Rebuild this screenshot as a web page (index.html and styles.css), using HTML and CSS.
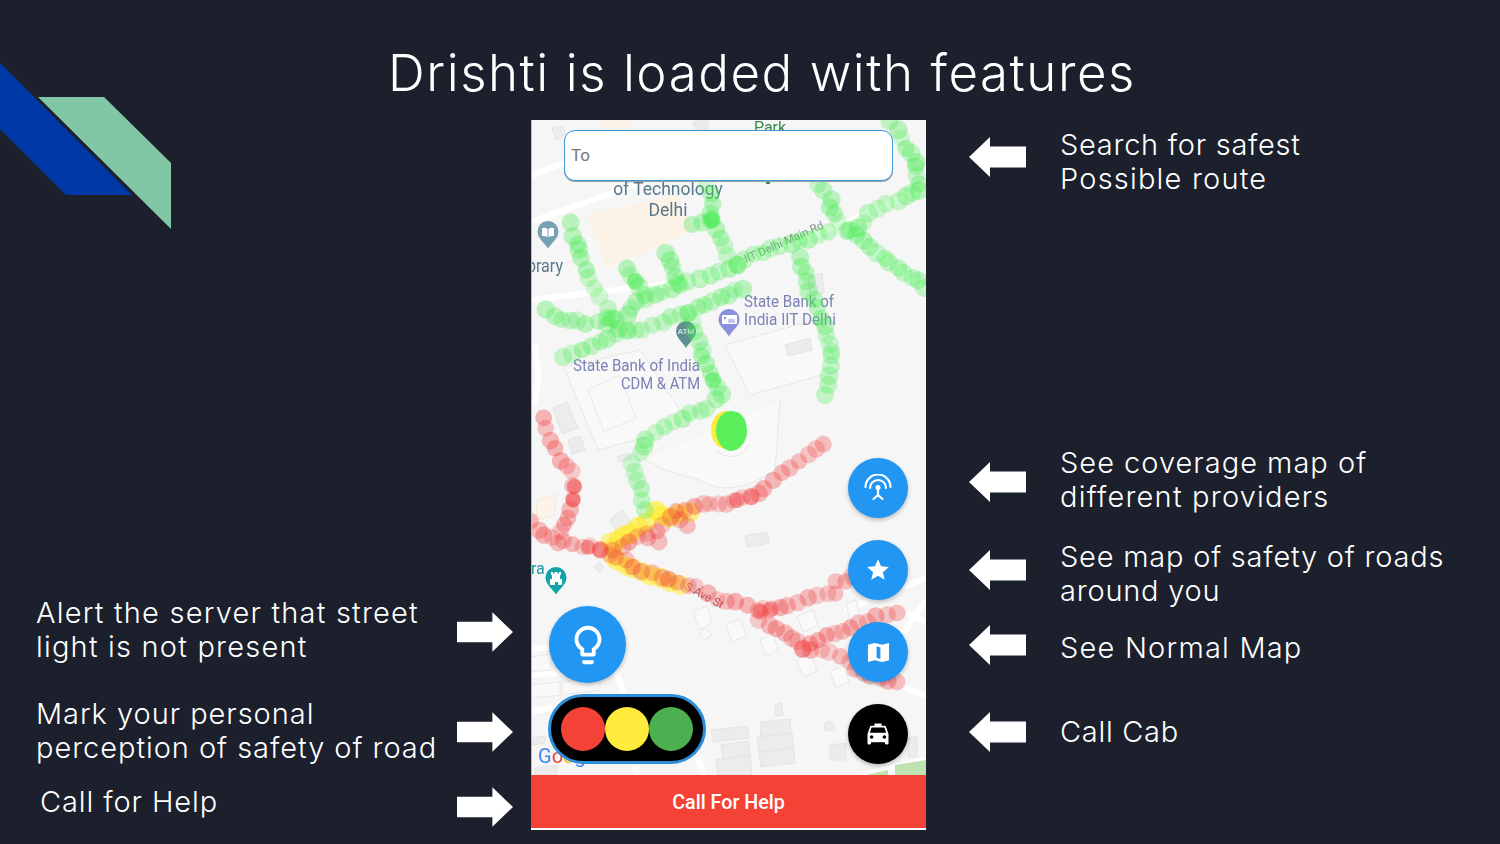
FILE: index.html
```html
<!DOCTYPE html>
<html lang="en">
<head>
    <meta charset="UTF-8">
    <title>Drishti features</title>
    <link rel="stylesheet" href="styles.css">
</head>
<body>
    <div class="slide">
        <svg class="deco" width="172" height="230" viewBox="0 0 172 230">
            <polygon points="0,63 132,195 66,195 0,129" fill="#0039a6"/>
            <polygon points="38,97 104,97 171,163 171,229" fill="#81c7a5"/>
        </svg>

        <h1 class="title">Drishti is loaded with features</h1>

        <div class="columns">
            <div class="notes-left">
                <div class="note note-alert">
                    <p>Alert the server that street<br><span class="loose">light is not present</span></p>
                    <svg class="arrow" viewBox="0 0 57 40"><polygon points="0,9.5 36,9.5 36,0 57,20 36,40 36,30.5 0,30.5"/></svg>
                </div>
                <div class="note note-mark">
                    <p>Mark your personal<br>perception of safety of road</p>
                    <svg class="arrow" viewBox="0 0 57 40"><polygon points="0,9.5 36,9.5 36,0 57,20 36,40 36,30.5 0,30.5"/></svg>
                </div>
                <div class="note note-help">
                    <p>Call for Help</p>
                    <svg class="arrow" viewBox="0 0 57 40"><polygon points="0,9.5 36,9.5 36,0 57,20 36,40 36,30.5 0,30.5"/></svg>
                </div>
            </div>

            <div class="phone">
                <div class="map">
                    <svg id="mapCanvas" class="map-canvas" viewBox="531 120 395 655" width="395" height="655">
                        <rect x="531" y="120" width="395" height="655" fill="#f6f6f7"/>
                        <g class="roads">
                            <path d="M531 176 L640 132"/>
                            <path d="M531 222 L660 176"/>
                            <path d="M531 300 L700 280 L840 225 L926 188"/>
                            <path d="M850 232 L926 290"/>
                            <path d="M708 150 L712 200"/>
                            <path d="M845 610 L926 578"/>
                            <path d="M903 687 L926 696"/>
                            <path d="M903 633 L926 600"/>
                            <path d="M907 613 L926 622"/>
                            <path d="M531 650 L580 640"/>
                            <path d="M531 675 L615 668 L624 693"/>
                            <path d="M531 712 L560 706"/>
                            <path d="M698 757 L704 775"/>
                            <path d="M634 767 L638 775"/>
                            <path d="M863 775 L926 760"/>
                            <path d="M534 345 Q542 375 534 404"/>
                        </g>
                        <polygon points="587,215 677,195 693,230 607,268" fill="#fdf2e6"/>
                        <polygon points="600,120 625,120 630,130 605,130" fill="#fdf2e6"/>
                        <polygon points="537,500 556,495 554,516 536,520" fill="#fdf3ea" stroke="#f6e8da"/>
                        <polygon points="895,765 926,760 926,775 895,775" fill="#bfe3b0"/>
                        <polygon points="866,775 888,770 888,775" fill="#bfe3b0"/>
                        <g class="outlines">
                            <path d="M564 367 L640 350 L690 425 L598 450 Z"/>
                            <path d="M588 390 L619 375 L636 418 L604 432 Z"/>
                            <path d="M725 345 L815 320 L840 370 L750 395 Z"/>
                            <path d="M645 460 L665 470 L700 480 Q730 500 775 470 L780 400"/>
                            <path d="M715 450 Q735 465 750 445"/>
                            <path d="M726 624 L741 619 L746 636 L732 642 Z"/>
                            <path d="M760 640 L773 634 L778 650 L766 656 Z"/>
                            <path d="M796 660 L811 653 L817 671 L804 677 Z"/>
                            <path d="M830 671 L844 665 L849 682 L836 688 Z"/>
                            <path d="M797 616 L813 610 L818 626 L803 632 Z"/>
                            <path d="M846 604 L856 600 L860 616 L850 620 Z"/>
                            <path d="M693 612 L707 606 L712 622 L700 630 Z"/>
                            <path d="M700 635 L704 628 L712 634 L705 640 Z"/>
                            <path d="M531 657 L551 654 L551 670 L531 672 Z"/>
                            <path d="M531 685 L560 682 L560 695 L531 698 Z"/>
                            <path d="M562 682 L600 678 L600 690 L562 695 Z"/>
                        </g>
                        <g class="blocks">
                            <polygon points="553,408 567,402 578,428 562,434"/>
                            <polygon points="568,440 581,436 585,450 572,454"/>
                            <polygon points="618,456 631,453 632,459 619,462"/>
                            <polygon points="745,536 767,532 769,543 747,547"/>
                            <polygon points="610,520 622,510 633,525 618,534"/>
                            <polygon points="594,567 599,562 604,567 599,572"/>
                            <polygon points="711,730 747,726 749,738 713,742"/>
                            <polygon points="721,745 748,741 750,755 723,759"/>
                            <polygon points="716,760 750,755 752,775 718,775"/>
                            <polygon points="760,722 790,719 791,733 761,736"/>
                            <polygon points="757,737 792,733 794,748 759,752"/>
                            <polygon points="759,752 794,748 795,763 761,767"/>
                            <polygon points="775,705 782,703 783,715 776,716"/>
                            <polygon points="830,745 846,743 846,760 830,760"/>
                            <polygon points="908,738 917,736 917,757 908,757"/>
                            <polygon points="533,738 545,736 545,743 533,745"/>
                            <polygon points="535,768 557,765 557,775 535,775"/>
                            <polygon points="808,277 822,273 824,293 810,296"/>
                            <polygon points="785,345 810,338 812,350 788,356"/>
                            <polygon points="552,128 562,126 566,134 556,140"/>
                            <polygon points="693,122 708,120 708,130 696,130"/>
                            <circle cx="829" cy="726" r="5"/>
                        </g>

                        <text class="lbl lbl-green" x="770" y="133" text-anchor="middle">Park</text>
                        <text class="lbl lbl-blue" x="668" y="195" text-anchor="middle">of Technology</text>
                        <text class="lbl lbl-blue" x="668" y="216" text-anchor="middle">Delhi</text>
                        <text class="lbl lbl-blue" x="527" y="272" textLength="36" lengthAdjust="spacingAndGlyphs">brary</text>
                        <text class="lbl lbl-bank" x="744" y="307" textLength="90" lengthAdjust="spacingAndGlyphs">State Bank of</text>
                        <text class="lbl lbl-bank" x="744" y="325" textLength="92" lengthAdjust="spacingAndGlyphs">India IIT Delhi</text>
                        <text class="lbl lbl-bank" x="573" y="371" textLength="127" lengthAdjust="spacingAndGlyphs">State Bank of India</text>
                        <text class="lbl lbl-bank" x="621" y="389" textLength="79" lengthAdjust="spacingAndGlyphs">CDM &amp; ATM</text>
                        <text class="lbl lbl-road" transform="translate(746 263) rotate(-24)">IIT Delhi Main Rd</text>
                        <text class="lbl lbl-road lbl-red" transform="translate(684 589) rotate(28)">S Ave St</text>
                        <text class="lbl lbl-teal" x="531" y="574">ra</text>

                        <path d="M548 221 a10.500 10.500 0 0 1 10.500 10.500 c0 7 -6 10 -10.500 17 c-4.500 -7 -10.500 -10 -10.500 -17 a10.500 10.500 0 0 1 10.500 -10.500z" fill="#78a0b4"/>
                        <path d="M542 228 q3 -1 5.500 1 v8 q-2.500 -1.500 -5.500 -1z M554 228 q-3 -1 -5.500 1 v8 q2.500 -1.500 5.500 -1z" fill="#fff"/>
                        <path d="M729 309 a10.500 10.500 0 0 1 10.500 10.500 c0 7 -6 9 -10.500 17 c-4.500 -8 -10.500 -10 -10.500 -17 a10.500 10.500 0 0 1 10.500 -10.500z" fill="#8a90dc"/>
                        <rect x="722" y="315" width="15" height="9" rx="1" fill="#fff"/>
                        <circle cx="725" cy="318" r="1.200" fill="#8a90dc"/>
                        <path d="M728 320 h7 M728 322 h7" stroke="#8a90dc" stroke-width="1"/>
                        <path d="M686 321 a10 10 0 0 1 10 10 c0 7 -6 10 -10 17 c-4 -7 -10 -10 -10 -17 a10 10 0 0 1 10 -10z" fill="#5f8f92"/>
                        <text class="lbl-atm" x="686" y="334" text-anchor="middle">ATM</text>
                        <path d="M556 567 a10.500 10.500 0 0 1 10.500 10.500 c0 7 -6 10 -10.500 17 c-4.500 -7 -10.500 -10 -10.500 -17 a10.500 10.500 0 0 1 10.500 -10.500z" fill="#14a3a8"/>
                        <path d="M550 585 v-6 h2 v-4 h-1 v-3 h2 v1.500 h1.500 v-1.500 h3 v1.500 h1.500 v-1.500 h2 v3 h-1 v4 h2 v6 h-4 v-3 h-3 v3z" fill="#fff"/>

                        <g id="tracks"></g>
                        <ellipse cx="726" cy="430" rx="15" ry="19" fill="#fdeb3c"/>
                        <path d="M731 411 C742 411 747 420 747 431 C747 442 739 451 731 451 C723 451 716 441 716 431 C716 420 722 411 731 411z" fill="#5bee5b"/>
                        <rect x="766" y="178" width="4" height="6" fill="#3b8a4a"/>

                        <text class="lbl-google" x="538" y="763"><tspan fill="#4285f4">G</tspan><tspan fill="#ea4335">o</tspan><tspan fill="#fbbc05">o</tspan><tspan fill="#4285f4">g</tspan></text>
                        <rect x="531" y="120" width="1" height="655" fill="#b9bcc2"/>
                    </svg>

                    <div class="search">To</div>

                    <button class="fab fab-bulb">
                        <svg width="46" height="46" viewBox="0 0 24 24"><path d="M9 21c0 .55.45 1 1 1h4c.55 0 1-.45 1-1v-1H9v1zm3-19C8.140 2 5 5.140 5 9c0 2.380 1.190 4.470 3 5.740V17c0 .55.45 1 1 1h6c.55 0 1-.45 1-1v-2.260c1.810-1.270 3-3.360 3-5.740 0-3.860-3.140-7-7-7zm2.850 11.100l-.85.6V16h-4v-2.300l-.85-.6C7.800 12.160 7 10.630 7 9c0-2.760 2.240-5 5-5s5 2.240 5 5c0 1.630-.8 3.160-2.150 4.100z"/></svg>
                    </button>

                    <div class="signal">
                        <span class="lamp lamp-red"></span>
                        <span class="lamp lamp-yellow"></span>
                        <span class="lamp lamp-green"></span>
                    </div>

                    <div class="fab-stack">
                        <button class="fab">
                            <svg class="tower" width="28" height="28" viewBox="0 0 28 28">
                                <path d="M1.500 13 A12.500 12.500 0 0 1 26.500 13"/>
                                <path d="M6 14 A8 8 0 0 1 22 14"/>
                                <path d="M14 14 V21 M14 21 L9.500 25 M14 21 L18.500 25"/>
                                <circle cx="14" cy="13.500" r="2.500" class="tower-dot"/>
                            </svg>
                        </button>
                        <button class="fab">
                            <svg width="26" height="26" viewBox="0 0 24 24"><path d="M12 17.270L18.180 21l-1.640-7.030L22 9.240l-7.190-.61L12 2 9.190 8.630 2 9.240l5.460 4.730L5.820 21z"/></svg>
                        </button>
                        <button class="fab">
                            <svg width="23" height="23" viewBox="0 0 24 24"><path fill-rule="evenodd" d="M1 4 L8 2 L16 4 L23 2 V20 L16 22 L8 20 L1 22 Z M10 5.500 V17.500 L14 18.800 V6.800 Z"/></svg>
                        </button>
                        <button class="fab fab-black">
                            <svg width="28" height="28" viewBox="0 0 24 24"><path d="M18.920 6.010C18.720 5.420 18.160 5 17.500 5H15V3H9v2H6.500c-.66 0-1.210.42-1.420 1.010L3 12v8c0 .55.45 1 1 1h1c.55 0 1-.45 1-1v-1h12v1c0 .55.45 1 1 1h1c.55 0 1-.45 1-1v-8l-2.080-5.990zM6.500 16c-.83 0-1.500-.67-1.500-1.500S5.670 13 6.500 13s1.500.67 1.500 1.500S7.330 16 6.500 16zm11 0c-.83 0-1.500-.67-1.500-1.500s.67-1.500 1.500-1.500 1.500.67 1.500 1.500-.67 1.500-1.500 1.500zM5 11l1.500-4.500h11L19 11H5z"/></svg>
                        </button>
                    </div>
                </div>
                <div class="help-bar">Call For Help</div>
            </div>

            <div class="notes-right">
                <div class="note note-search">
                    <svg class="arrow" viewBox="0 0 57 40"><polygon points="57,9.500 21,9.500 21,0 0,20 21,40 21,30.500 57,30.500"/></svg>
                    <p>Search for safest<br><span class="loose">Possible route</span></p>
                </div>
                <div class="note note-coverage">
                    <svg class="arrow" viewBox="0 0 57 40"><polygon points="57,9.500 21,9.500 21,0 0,20 21,40 21,30.500 57,30.500"/></svg>
                    <p>See coverage map of<br><span class="loose">different providers</span></p>
                </div>
                <div class="note note-safety">
                    <svg class="arrow" viewBox="0 0 57 40"><polygon points="57,9.500 21,9.500 21,0 0,20 21,40 21,30.500 57,30.500"/></svg>
                    <p>See map of safety of roads<br>around you</p>
                </div>
                <div class="note note-normal">
                    <svg class="arrow" viewBox="0 0 57 40"><polygon points="57,9.500 21,9.500 21,0 0,20 21,40 21,30.500 57,30.500"/></svg>
                    <p>See Normal Map</p>
                </div>
                <div class="note note-cab">
                    <svg class="arrow" viewBox="0 0 57 40"><polygon points="57,9.500 21,9.500 21,0 0,20 21,40 21,30.500 57,30.500"/></svg>
                    <p>Call Cab</p>
                </div>
            </div>
        </div>
    </div>
    <script src="map.js"></script>
</body>
</html>
```

FILE: styles.css
```css
body {
    margin: 0;
    background-color: #1b202c;
    font-family: Inter, "Open Sans", sans-serif;
    color: white;
}
.slide {
    position: relative;
    width: 1500px;
    height: 844px;
    overflow: hidden;
}
.deco {
    position: absolute;
    left: 0;
    top: 0;
}
.title {
    height: 120px;
    margin: 0;
    padding-left: 24px;
    box-sizing: border-box;
    text-align: center;
    font-size: 51px;
    font-weight: 300;
    line-height: 146px;
    letter-spacing: 1.55px;
}
.columns {
    display: grid;
    grid-template-columns: 531px 395px 1fr;
}

/* side notes */
.note {
    display: flex;
    align-items: flex-start;
}
.note p {
    margin: 0;
    font-size: 29px;
    font-weight: 300;
    line-height: 34px;
    letter-spacing: 0.7px;
    white-space: nowrap;
}
.note p .loose {
    letter-spacing: 1.2px;
}
.arrow {
    flex: none;
    width: 57px;
    height: 40px;
    fill: white;
}
.notes-left {
    padding: 0 18px 0 36px;
}
.notes-left .note {
    justify-content: space-between;
}
.notes-left .arrow {
    width: 56px;
}
.note-alert { margin-top: 476px; }
.note-alert p { letter-spacing: 1.2px; }
.note-alert .arrow { margin-top: 16px; }
.note-mark { margin-top: 33px; }
.note-mark p { letter-spacing: 0.95px; }
.note-mark .arrow { margin-top: 15px; }
.note-help { margin-top: 20px; padding-left: 4px; }
.note-help p { letter-spacing: 0.9px; }
.note-help .arrow { margin-top: 2px; }

.notes-right {
    padding-left: 43px;
}
.notes-right p {
    margin-left: 34px;
}
.note-search { margin-top: 8px; }
.note-search p { letter-spacing: 0.72px; }
.note-search .arrow { margin-top: 9px; }
.note-coverage { margin-top: 250px; }
.note-coverage p { letter-spacing: 1px; }
.note-coverage .arrow { margin-top: 16px; }
.note-safety { margin-top: 26px; }
.note-safety p { letter-spacing: 0.78px; }
.note-safety .arrow { margin-top: 10px; }
.note-normal { margin-top: 17px; }
.note-normal p { margin-top: 6px; letter-spacing: 1.2px; }
.note-cab { margin-top: 47px; }
.note-cab p { margin-top: 3px; }

/* phone */
.phone {
    height: 710px;
    background: white;
}
.map {
    position: relative;
    height: 655px;
    overflow: hidden;
}
.map-canvas {
    display: block;
    filter: blur(0.35px);
}
.roads path {
    fill: none;
    stroke: white;
    stroke-width: 6;
}
.outlines path {
    fill: #f9f9f9;
    stroke: #e8e8e8;
    stroke-width: 1;
}
.blocks {
    fill: #ececec;
    stroke: #e4e4e4;
    stroke-width: 1;
}
.lbl {
    font-family: Roboto, sans-serif;
    font-size: 16px;
}
.lbl-green { fill: #3b8a4a; }
.lbl-blue { fill: #56798c; font-size: 17.500px; }
.lbl-bank { fill: #7b82b4; }
.lbl-road { fill: #8a8f94; font-size: 11.500px; }
.lbl-red { fill: #a06060; }
.lbl-teal { fill: #1a9aa0; }
.lbl-atm {
    font-family: Roboto, sans-serif;
    font-size: 8px;
    fill: white;
}
.lbl-google {
    font-family: Roboto, sans-serif;
    font-size: 20px;
}
.search {
    position: absolute;
    left: 33px;
    top: 10px;
    width: 329px;
    height: 51px;
    box-sizing: border-box;
    padding-left: 6px;
    background: white;
    border: 1.500px solid #3f97d6;
    border-radius: 11px;
    box-shadow: 0 1px 0 #9aa0a6;
    font-family: Roboto, sans-serif;
    font-size: 17px;
    line-height: 48px;
    color: #757575;
}
.fab {
    display: flex;
    align-items: center;
    justify-content: center;
    width: 60px;
    height: 60px;
    padding: 0;
    border: none;
    border-radius: 50%;
    background-color: #2196f3;
    box-shadow: 0 2px 4px rgba(0, 0, 0, 0.25);
    fill: white;
}
.fab-black {
    background-color: black;
}
.fab-stack {
    position: absolute;
    left: 317px;
    top: 338px;
    display: flex;
    flex-direction: column;
    gap: 22px;
}
.fab-bulb {
    position: absolute;
    left: 18px;
    top: 486px;
    width: 77px;
    height: 77px;
}
.tower {
    fill: none;
    stroke: white;
    stroke-width: 2.200;
    stroke-linecap: round;
}
.tower-dot {
    fill: white;
    stroke: none;
}
.signal {
    position: absolute;
    left: 17px;
    top: 574px;
    display: flex;
    align-items: center;
    width: 158px;
    height: 70px;
    box-sizing: border-box;
    padding-left: 10px;
    background: black;
    border: 3px solid #2b8fdc;
    border-radius: 35px;
}
.lamp {
    width: 44px;
    height: 44px;
    border-radius: 50%;
}
.lamp-red { background-color: #f44336; }
.lamp-yellow { background-color: #ffeb3b; }
.lamp-green { background-color: #4caf50; }
.help-bar {
    height: 53px;
    background-color: #f44336;
    font-family: Roboto, sans-serif;
    font-size: 19.700px;
    font-weight: 500;
    line-height: 55px;
    text-align: center;
    color: white;
}
```

FILE: map.js
```js
// dots along the recorded routes, same jitter on every load
var GREEN = '70, 235, 80';
var RED = '240, 60, 60';
var YELLOW = '255, 235, 40';

// colour, opacity, radius, points
var routes = [
    [YELLOW, 0.55, 10, [[617,540],[630,533],[648,522],[655,512],[668,518],[690,512]]],
    [YELLOW, 0.5, 10, [[611,541],[613,557],[625,566],[650,574],[680,585]]],
    [GREEN, 0.3, 9, [[890,122],[897,131],[907,148],[915,161],[918,175],[920,191],[897,201],[877,208],[863,221],[850,231],[877,251],[897,268],[920,281],[924,288]]],
    [GREEN, 0.3, 9, [[817,185],[830,198],[833,215],[847,231]]],
    [GREEN, 0.3, 9, [[827,233],[790,245],[763,251],[737,265],[710,275],[687,280],[663,291],[637,301],[627,315],[607,325]]],
    [GREEN, 0.3, 9, [[707,185],[712,205],[712,220],[720,238],[728,255],[737,265]]],
    [GREEN, 0.3, 9, [[693,223],[712,220]]],
    [GREEN, 0.3, 9, [[572,221],[573,235],[580,251],[585,268],[595,288],[607,308],[617,328],[627,331]]],
    [GREEN, 0.3, 9, [[547,311],[563,321],[587,323],[607,318]]],
    [GREEN, 0.3, 9, [[628,268],[635,281],[645,295]]],
    [GREEN, 0.3, 9, [[665,253],[673,266],[680,285]]],
    [GREEN, 0.3, 9, [[743,288],[720,298],[697,308],[663,321],[643,330],[627,331],[607,338],[583,348],[563,357]]],
    [GREEN, 0.3, 9, [[800,258],[807,281],[817,308],[827,335],[832,351],[832,357],[827,383],[825,395]]],
    [GREEN, 0.3, 9, [[687,315],[700,341],[703,357],[713,380],[723,393],[707,408],[683,417],[663,427],[647,438],[640,453],[633,465],[638,480],[642,500],[645,510]]],
    [RED, 0.3, 8.5, [[822,443],[807,453],[790,467],[773,482],[750,497],[727,503],[703,505],[677,513],[657,530],[630,542],[613,550]]],
    [RED, 0.3, 8.5, [[543,419],[550,440],[560,460],[572,473],[573,487],[573,500],[567,517],[562,533],[558,543]]],
    [RED, 0.3, 8.5, [[532,523],[543,535],[573,543],[600,550],[617,557],[643,570],[670,580],[697,587],[717,598],[737,603],[757,610],[760,620],[777,628],[793,637],[803,648],[830,652],[840,658],[863,673],[897,682]]],
    [RED, 0.3, 8.5, [[763,610],[787,605],[807,597],[837,593],[837,583],[860,575]]],
    [RED, 0.3, 8.5, [[803,647],[827,635],[850,628],[877,617],[897,613]]],
    [RED, 0.3, 8.5, [[688,527],[680,520]]],
    [RED, 0.3, 8.5, [[658,543],[648,538]]],
    // spots where the same place was reported again
    [RED, 0.55, 7.5, [[573,487],[573,500]]],
    [RED, 0.4, 8, [[588,547],[600,550]]],
    [RED, 0.4, 8, [[750,497],[737,500]]],
    [RED, 0.4, 8, [[762,612],[770,610]]],
    [GREEN, 0.45, 8, [[712,220]]],
    [GREEN, 0.45, 8, [[635,281]]],
    [GREEN, 0.45, 8, [[713,380]]]
];

var seed = 7;
function jitter(range) {
    seed = (seed * 16807) % 2147483647;
    return (seed / 2147483647 - 0.5) * range;
}

var group = document.getElementById('tracks');
function addDot(x, y, r, fill) {
    var dot = document.createElementNS('http://www.w3.org/2000/svg', 'circle');
    dot.setAttribute('cx', x);
    dot.setAttribute('cy', y);
    dot.setAttribute('r', r);
    dot.setAttribute('fill', fill);
    group.appendChild(dot);
}

routes.forEach(function(route) {
    var points = route[3];
    for (var i = 0; i < points.length - 1; i++) {
        var dx = points[i + 1][0] - points[i][0];
        var dy = points[i + 1][1] - points[i][1];
        var steps = Math.max(1, Math.round(Math.sqrt(dx * dx + dy * dy) / 9.5));
        for (var s = 0; s < steps; s++) {
            var alpha = route[1] + jitter(0.14);
            addDot(points[i][0] + dx * s / steps + jitter(3.5),
                   points[i][1] + dy * s / steps + jitter(3.5),
                   route[2] + jitter(1),
                   'rgba(' + route[0] + ', ' + alpha + ')');
        }
    }
    var end = points[points.length - 1];
    addDot(end[0], end[1], route[2], 'rgba(' + route[0] + ', ' + route[1] + ')');
});
```
